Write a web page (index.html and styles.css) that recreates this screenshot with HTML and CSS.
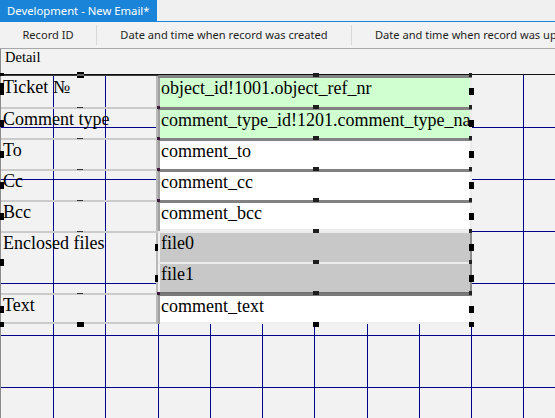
FILE: index.html
```html
<!DOCTYPE html>
<html lang="en">
<head>
    <meta charset="UTF-8">
    <title>Development - New Email*</title>
    <link rel="stylesheet" href="styles.css">
</head>
<body>
<div class="tabs">
    <div class="tab">Development - New Email*</div>
</div>
<div class="cols">
    <div class="col col-id">Record ID</div>
    <div class="col col-created">Date and time when record was created</div>
    <div class="col col-updated">Date and time when record was updated</div>
</div>
<div class="report">
    <div class="caption">Detail</div>
    <div class="band">
        <!-- Ticket -->
        <div class="lbl first">Ticket №<i class="h h-corner"></i><i class="h h-dash2"></i><i class="h h-ml tall"></i></div>
        <div class="fld green"><span class="val">object_id!1001.object_ref_nr</span><i class="h h-tm"></i><i class="h h-tr"></i><i class="h h-mr"></i></div>
        <!-- Comment type -->
        <div class="lbl">Comment type<i class="h h-dash"></i><i class="h h-ml"></i></div>
        <div class="fld green"><span class="val">comment_type_id!1201.comment_type_name</span><i class="h h-tl"></i><i class="h h-tm"></i><i class="h h-tr"></i><i class="h h-mr"></i></div>
        <!-- To -->
        <div class="lbl">To<i class="h h-dash"></i><i class="h h-ml"></i></div>
        <div class="fld"><span class="val">comment_to</span><i class="h h-tl"></i><i class="h h-tm"></i><i class="h h-tr"></i><i class="h h-mr"></i></div>
        <!-- Cc -->
        <div class="lbl">Cc<i class="h h-dash"></i><i class="h h-ml"></i></div>
        <div class="fld"><span class="val">comment_cc</span><i class="h h-tl"></i><i class="h h-tm"></i><i class="h h-tr"></i><i class="h h-mr"></i></div>
        <!-- Bcc -->
        <div class="lbl">Bcc<i class="h h-dash"></i><i class="h h-ml"></i></div>
        <div class="fld last-input"><span class="val">comment_bcc</span><i class="h h-tl"></i><i class="h h-tm"></i><i class="h h-tr"></i><i class="h h-mr"></i></div>
        <!-- Enclosed files -->
        <div class="lbl files">Enclosed files<i class="h h-dash"></i><i class="h h-ml"></i></div>
        <div class="fld file"><span class="val">file0</span><i class="h h-fl"></i><i class="h h-tm"></i><i class="h h-tr"></i><i class="h h-mr"></i></div>
        <div class="fld file file-last"><span class="val">file1</span><i class="h h-fl"></i><i class="h h-tm"></i><i class="h h-tr"></i><i class="h h-mr"></i></div>
        <!-- Text -->
        <div class="lbl bottom">Text<i class="h h-dash"></i><i class="h h-ml"></i><i class="h h-bl"></i><i class="h h-bm"></i></div>
        <div class="fld bottom"><span class="val">comment_text</span><i class="h h-tl"></i><i class="h h-tm"></i><i class="h h-tr"></i><i class="h h-mr"></i><i class="h h-fbm"></i><i class="h h-fbr"></i></div>
    </div>
</div>
</body>
</html>
```

FILE: styles.css
```css
body { margin: 0; height: 100vh; overflow: hidden; display: flex; flex-direction: column; background: #f2f2f2; font-family: "Noto Sans", sans-serif; }

/* --- tab strip --- */
.tabs { flex: none; display: flex; height: 21px; background: #f0f0f0; border-bottom: 1px solid #1a84d8; }
.tab { background: #1a84d8; color: #fff; font-size: 11.3px; line-height: 21px; padding: 0 7px; white-space: nowrap; }

/* --- column headers --- */
.cols { flex: none; display: flex; align-items: center; height: 26px; border-bottom: 1px solid #a8a8a8; font-size: 11.1px; color: #1e1e1e; white-space: nowrap; overflow: hidden; }
.col { flex: none; height: 20px; line-height: 20px; }
.col-id { width: 96px; text-align: center; }
.col-created { width: 254px; text-align: center; border-left: 1px solid #d9d9d9; }
.col-updated { padding-left: 23px; border-left: 1px solid #d9d9d9; }

/* --- report designer --- */
.report { flex: 1; display: flex; flex-direction: column; border-left: 1px solid #8c8c8c; }
.caption { flex: none; height: 25px; line-height: 25px; padding-left: 4px; font: 14.5px "Liberation Serif", serif; color: #000; }
.band {
    --g: linear-gradient(#00008c, #00008c);
    flex: 1;
    display: grid;
    grid-template-columns: 157px 314px;
    grid-template-rows: 32px repeat(7, 31px);
    align-content: start;
    border-top: 1px solid #111;
    font: 18px/20px "Liberation Serif", serif;
    color: #000;
    background-color: #f2f2f2;
    background-image: var(--g), var(--g), var(--g), var(--g), var(--g), var(--g), var(--g), var(--g), var(--g), var(--g),
                      var(--g), var(--g), var(--g), var(--g), var(--g), var(--g);
    background-size: 1px 100%, 1px 100%, 1px 100%, 1px 100%, 1px 100%, 1px 100%, 1px 100%, 1px 100%, 1px 100%, 1px 100%,
                     100% 1px, 100% 1px, 100% 1px, 100% 1px, 100% 1px, 100% 1px;
    background-position: 52px 0, 104px 0, 157px 0, 209px 0, 261px 0, 313px 0, 366px 0, 418px 0, 470px 0, 522px 0,
                         0 52px, 0 104px, 0 156px, 0 208px, 0 260px, 0 312px;
    background-repeat: no-repeat;
}

.lbl { position: relative; padding: 2px 0 0 2px; white-space: nowrap; box-shadow: inset 0 2px #cbcbcb, inset -2px 0 #b9b9b9; }
.lbl.first { box-shadow: inset 0 1px #3c3c3c, inset -2px 0 #b9b9b9; }
.lbl.files { grid-row: span 2; }
.lbl.bottom { box-shadow: inset 0 2px #cbcbcb, inset -2px 0 #b9b9b9, inset 0 -2px #cbcbcb; }

.fld { position: relative; padding: 3px 2px 0 3px; background: #fff; box-shadow: inset 0 3px #828282, inset 2px 0 #a0a0a0, inset -2px 0 #ececec; }
.fld.green { background: #d0ffd0; }
.fld.last-input { box-shadow: inset 0 3px #828282, inset 2px 0 #a0a0a0, inset -2px 0 #ececec, inset 0 -2px #ececec; }
.fld.file { padding-top: 2px; background: #c8c8c8; box-shadow: inset 0 2px #ececec, inset 2px 0 #f0f0f0, inset -2px 0 #8a8a8a; }
.fld.file-last { box-shadow: inset 0 2px #ececec, inset 2px 0 #f0f0f0, inset -2px 0 #8a8a8a, inset 0 -1px #6e6e6e; }
.fld.bottom { box-shadow: inset 0 3px #7a7a7a, inset 2px 0 #a0a0a0, inset -2px 0 #ececec, inset 0 -2px #eeeeee; }
.val { display: block; overflow: hidden; white-space: nowrap; }

/* --- selection handles --- */
.h { position: absolute; display: block; background: #000; }
.h-corner { left: -1px; top: -2px; width: 4px; height: 3px; }
.h-ml { left: -1px; top: calc(50% - 3px); width: 4px; height: 7px; }
.h-ml.tall { top: 8px; height: 12px; }
.h-dash { left: 76px; top: 0; width: 6px; height: 1px; background: #333; }
.h-dash2 { left: 76px; top: -3px; width: 7px; height: 2px; border-top: 2px solid #000; border-bottom: 2px solid #000; background: #666; }
.h-bl { left: -1px; bottom: -3px; width: 4px; height: 5px; }
.h-bm { left: 76px; bottom: -3px; width: 7px; height: 5px; }
.h-tl { left: -1px; top: -1px; width: 3px; height: 3px; background: #3a1838; }
.h-tm { left: 155px; top: -2px; width: 6px; height: 4px; background: #1e1e1e; }
.h-tr { left: 311px; top: -2px; width: 3px; height: 4px; background: #222; }
.h-mr { left: 311px; top: calc(50% - 3px); width: 5px; height: 7px; }
.h-fl { left: -3px; top: calc(50% - 3px); width: 3px; height: 7px; }
.h-fbm { left: 155px; bottom: -3px; width: 6px; height: 5px; }
.h-fbr { left: 311px; bottom: -3px; width: 5px; height: 5px; }
```
